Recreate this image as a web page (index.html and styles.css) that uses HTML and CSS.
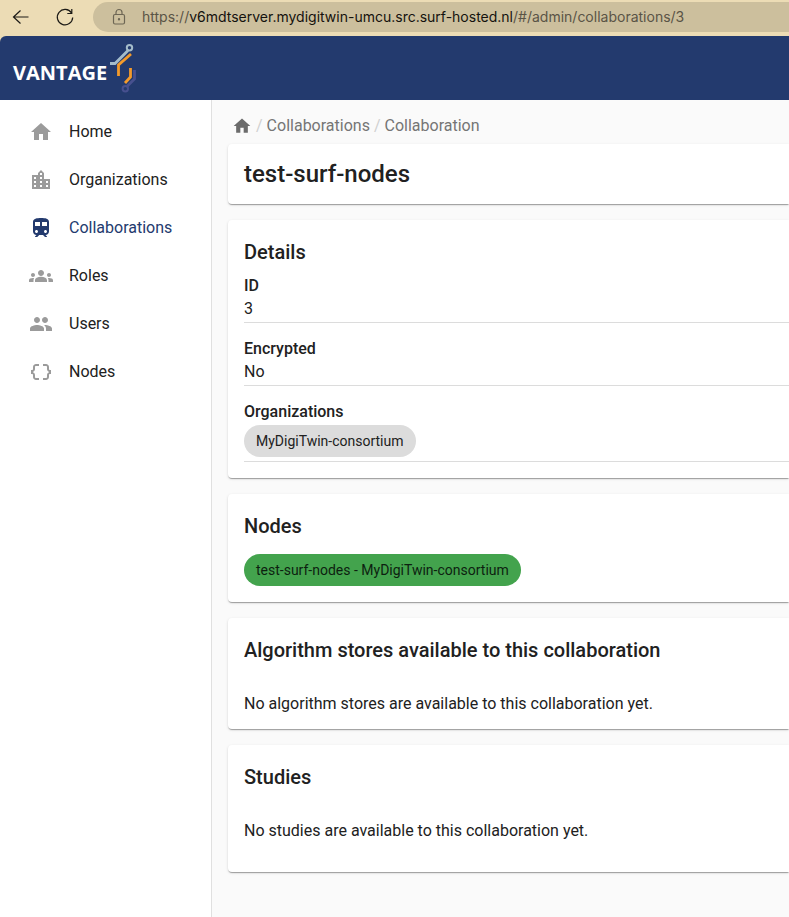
FILE: index.html
```html
<!DOCTYPE html>
<html lang="en">
<head>
<meta charset="utf-8">
<title>Collaboration</title>
<link rel="stylesheet" href="styles.css">
</head>
<body>
<div class="browser-bar">
  <button class="browser-button" type="button" aria-label="Back">
    <svg width="20" height="20" viewBox="0 0 20 20"><path d="M18.500 10H3.500M10.500 3.500L3.500 10l7 6.500"/></svg>
  </button>
  <button class="browser-button" type="button" aria-label="Reload">
    <svg width="20" height="20" viewBox="0 0 20 20"><path d="M17.500 6A7.700 7.700 0 1 0 18.700 10.500M17.800 2v4.500h-4.500"/></svg>
  </button>
  <div class="address">
    <svg class="lock" width="16" height="18" viewBox="0 0 16 18"><rect x="2.500" y="6.500" width="11" height="9.500" rx="1.500"/><path d="M5 6.500V4.500a3 3 0 0 1 6 0v2"/><circle cx="8" cy="11.300" r=".6"/></svg>
    <span>https://<b>v6mdtserver.mydigitwin-umcu.src.surf-hosted.nl</b>/#/admin/collaborations/3</span>
  </div>
</div>
<header class="app-header">
  <a class="logo" href="#">
    <span class="logo-text">VANTAGE</span>
    <svg width="30" height="52" viewBox="0 0 30 52" aria-hidden="true">
      <path class="steel" d="M3 21.500h5L21 8.500"/><circle class="steel thin" cx="22.500" cy="5.800" r="2.700"/>
      <path class="orange" d="M24 12L11.500 23v11"/>
      <path class="orange" d="M23.500 26v9L18 41"/>
      <path class="violet" d="M27.500 28v9L20 44.500"/><circle class="violet thin" cx="18.300" cy="46.700" r="2.700"/>
    </svg>
  </a>
</header>
<div class="app-body">
  <nav class="sidebar">
    <a class="nav-item" href="#"><svg viewBox="0 0 24 24"><path d="M10 20v-6h4v6h5v-8h3L12 3 2 12h3v8z"/></svg>Home</a>
    <a class="nav-item" href="#"><svg viewBox="0 0 24 24"><path d="M15 11V5l-3-3-3 3v2H3v14h18V11h-6zm-8 8H5v-2h2v2zm0-4H5v-2h2v2zm0-4H5V9h2v2zm6 8h-2v-2h2v2zm0-4h-2v-2h2v2zm0-4h-2V9h2v2zm0-4h-2V5h2v2zm6 12h-2v-2h2v2zm0-4h-2v-2h2v2z"/></svg>Organizations</a>
    <a class="nav-item active" href="#" aria-current="page"><svg viewBox="0 0 24 24"><path d="M12 2c-4 0-8 .5-8 4v9.500C4 17.430 5.570 19 7.500 19L6 20.500v.5h2.230l2-2H14l2 2h2v-.5L16.500 19c1.930 0 3.500-1.570 3.500-3.500V6c0-3.500-3.580-4-8-4zM7.500 17c-.83 0-1.500-.67-1.500-1.500S6.670 14 7.500 14s1.500.67 1.500 1.500S8.330 17 7.500 17zm3.500-7H6V6h5v4zm2 0V6h5v4h-5zm3.500 7c-.83 0-1.500-.67-1.500-1.500s.67-1.500 1.500-1.500 1.500.67 1.500 1.500-.67 1.500-1.500 1.500z"/></svg>Collaborations</a>
    <a class="nav-item" href="#"><svg viewBox="0 0 24 24"><path d="M12 12.750c1.630 0 3.070.39 4.240.9 1.080.48 1.760 1.560 1.760 2.730V18H6v-1.610c0-1.180.68-2.260 1.760-2.730 1.170-.52 2.610-.91 4.240-.91zM4 13c1.100 0 2-.9 2-2s-.9-2-2-2-2 .9-2 2 .9 2 2 2zm1.130 1.100c-.37-.06-.74-.1-1.130-.1-.99 0-1.930.21-2.780.58C.48 14.900 0 15.620 0 16.430V18h4.500v-1.610c0-.83.23-1.610.63-2.290zM20 13c1.100 0 2-.9 2-2s-.9-2-2-2-2 .9-2 2 .9 2 2 2zm4 3.430c0-.81-.48-1.530-1.220-1.850-.85-.37-1.790-.58-2.780-.58-.39 0-.76.04-1.130.1.4.68.63 1.460.63 2.290V18H24v-1.570zM12 6c1.660 0 3 1.340 3 3s-1.340 3-3 3-3-1.340-3-3 1.340-3 3-3z"/></svg>Roles</a>
    <a class="nav-item" href="#"><svg viewBox="0 0 24 24"><path d="M16 11c1.660 0 2.990-1.340 2.990-3S17.660 5 16 5c-1.660 0-3 1.340-3 3s1.340 3 3 3zm-8 0c1.660 0 2.990-1.340 2.990-3S9.660 5 8 5C6.340 5 5 6.340 5 8s1.340 3 3 3zm0 2c-2.330 0-7 1.170-7 3.500V19h14v-2.500c0-2.330-4.670-3.500-7-3.500zm8 0c-.29 0-.62.02-.97.05 1.160.84 1.970 1.970 1.970 3.450V19h6v-2.500c0-2.330-4.670-3.500-7-3.500z"/></svg>Users</a>
    <a class="nav-item" href="#"><svg viewBox="0 0 24 24"><path d="M4 7v2c0 .55-.45 1-1 1H2v4h1c.55 0 1 .45 1 1v2c0 1.650 1.350 3 3 3h3v-2H7c-.55 0-1-.45-1-1v-2c0-1.300-.84-2.420-2-2.830v-.34C5.160 11.420 6 10.300 6 9V7c0-.55.45-1 1-1h3V4H7C5.350 4 4 5.350 4 7zm17 3c-.55 0-1-.45-1-1V7c0-1.650-1.350-3-3-3h-3v2h3c.55 0 1 .45 1 1v2c0 1.300.84 2.420 2 2.830v.34c-1.160.41-2 1.520-2 2.830v2c0 .55-.45 1-1 1h-3v2h3c1.650 0 3-1.350 3-3v-2c0-.55.45-1 1-1h1v-4h-1z"/></svg>Nodes</a>
  </nav>
  <main class="content">
    <div class="breadcrumbs">
      <a class="crumb-home" href="#" aria-label="Home"><svg viewBox="0 0 24 24"><path d="M10 20v-6h4v6h5v-8h3L12 3 2 12h3v8z"/></svg></a>
      <span class="slash">/</span>
      <a href="#">Collaborations</a>
      <span class="slash">/</span>
      <span>Collaboration</span>
    </div>
    <section class="card title-card"><h1>test-surf-nodes</h1></section>
    <section class="card">
      <h2>Details</h2>
      <dl class="fields">
        <div class="field"><dt>ID</dt><dd>3</dd></div>
        <div class="field"><dt>Encrypted</dt><dd>No</dd></div>
        <div class="field"><dt>Organizations</dt><dd><button class="chip" type="button">MyDigiTwin-consortium</button></dd></div>
      </dl>
    </section>
    <section class="card nodes-card">
      <h2>Nodes</h2>
      <button class="chip online" type="button">test-surf-nodes - MyDigiTwin-consortium</button>
    </section>
    <section class="card">
      <h2>Algorithm stores available to this collaboration</h2>
      <p>No algorithm stores are available to this collaboration yet.</p>
    </section>
    <section class="card roomy">
      <h2>Studies</h2>
      <p>No studies are available to this collaboration yet.</p>
    </section>
  </main>
</div>
</body>
</html>
```
FILE: styles.css
```css
* { box-sizing: border-box; }

body {
  margin: 0;
  min-height: 100vh;
  display: flex;
  flex-direction: column;
  background: #ecdcb5;
  color: #212121;
  font: 16px/24px Roboto, sans-serif;
}

a { color: inherit; text-decoration: none; }
button { border: 0; font: inherit; color: inherit; cursor: pointer; }
h1, h2, p, dl, dd { margin: 0; }

.browser-bar {
  display: flex;
  align-items: center;
  height: 36px;
  padding: 0 0 3px 10px;
}

.browser-button {
  display: flex;
  width: 20px;
  margin-right: 24px;
  padding: 0;
  background: none;
}

.browser-button svg { fill: none; stroke: #1c1a16; stroke-width: 1.2; }

.address {
  flex: 1;
  display: flex;
  align-items: center;
  gap: 15px;
  height: 30px;
  margin-left: -5px;
  padding-left: 18px;
  border-radius: 15px 0 0 15px;
  background: #ccbf9d;
  color: #5a5446;
  font: 14px/20px Inter, sans-serif;
  white-space: nowrap;
  overflow: hidden;
}

.address b { color: #14120e; font-weight: 400; }
.lock { flex: none; fill: none; stroke: #6d6654; stroke-width: 1.2; }

.app-header {
  display: flex;
  align-items: center;
  height: 64px;
  padding-left: 13px;
  border-radius: 6px 0 0 0;
  background: #233a6e;
}

.logo { display: flex; align-items: center; }

.logo-text {
  padding-top: 10px;
  color: #fff;
  font: 700 20px/24px "Open Sans", sans-serif;
}

.logo svg { fill: none; stroke-width: 2.8; }
.logo .thin { stroke-width: 2; }
.steel { stroke: #a4bccb; }
.orange { stroke: #f39a2b; }
.violet { stroke: #47508f; }

.app-body { flex: 1; display: flex; background: #fafafa; }

.sidebar {
  flex: none;
  width: 212px;
  padding-top: 8px;
  border-right: 1px solid #e0e0e0;
  background: #fff;
}

.nav-item {
  display: flex;
  align-items: center;
  gap: 16px;
  height: 48px;
  padding-left: 29px;
}

.nav-item svg { width: 24px; height: 24px; fill: #9b9b9b; }
.nav-item.active { color: #233a6e; }
.nav-item.active svg { fill: #233a6e; }

.content {
  flex: 1;
  min-width: 0;
  display: flex;
  flex-direction: column;
  gap: 16px;
  padding: 16px 0 16px 16px;
}

.breadcrumbs {
  display: flex;
  align-items: center;
  gap: 4px;
  height: 20px;
  margin-bottom: -8px;
  padding-left: 4px;
  color: #757575;
}

.crumb-home { display: flex; }
.crumb-home svg { width: 20px; height: 20px; fill: #6b6b6b; }
.slash { color: #d0d0d0; }

.card {
  padding: 16px 0 16px 16px;
  border-radius: 4px 0 0 4px;
  background: #fff;
  box-shadow: 0 2px 1px -1px rgba(0, 0, 0, 0.2), 0 1px 1px rgba(0, 0, 0, 0.14), 0 1px 3px rgba(0, 0, 0, 0.12);
}

.title-card { padding-top: 14px; padding-bottom: 14px; }
h1 { font-size: 24px; line-height: 32px; font-weight: 500; }
h2 { font-size: 20px; line-height: 32px; font-weight: 500; }

.fields { display: flex; flex-direction: column; gap: 14px; padding-top: 6px; }
.field { padding-bottom: 2px; border-bottom: 1px solid #dcdcdc; }
dt { line-height: 23px; font-weight: 500; }
dd { line-height: 23px; }

.chip {
  display: block;
  height: 32px;
  margin: 2px 0;
  padding: 0 12px;
  border-radius: 16px;
  background: #dcdcdc;
  font-size: 14px;
  line-height: 20px;
}

.nodes-card .chip { margin: 12px 0 0; }
.online { background: #43a34d; color: #0d1f10; }
.card p { padding-top: 26px; line-height: 23px; margin-bottom: -2px; }
.roomy { padding-bottom: 32px; }
```
